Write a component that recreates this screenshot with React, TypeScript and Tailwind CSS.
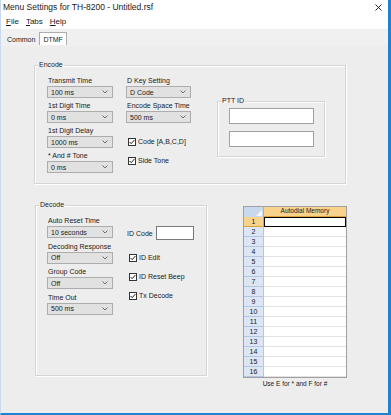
import React from "react";

const font = { fontFamily: '"Liberation Sans", Arial, sans-serif' };

function Select({ value, w = "w-[66px]" }: { value: string; w?: string }) {
  return (
    <div
      className={`${w} h-[12px] flex items-center justify-between border border-[#adadad] bg-[#e1e1e1] pl-[3px] pr-[4px] text-[7px] leading-none whitespace-nowrap`}
    >
      <span>{value}</span>
      <svg width="6" height="4" viewBox="0 0 6 4">
        <path d="M0.5 0.5 L3 3 L5.5 0.5" fill="none" stroke="#606060" strokeWidth="0.9" />
      </svg>
    </div>
  );
}

function Field({ label, value, w }: { label: string; value: string; w?: string }) {
  return (
    <div className="flex flex-col">
      <div className="h-[10px] text-[7px] leading-[10px] pl-[1px] whitespace-nowrap">{label}</div>
      <Select value={value} w={w} />
    </div>
  );
}

function Check({ label }: { label: string }) {
  return (
    <div className="flex items-center gap-[2px] h-[9px] text-[7px] leading-none pl-[2px] whitespace-nowrap">
      <svg width="8" height="8" viewBox="0 0 8 8">
        <rect x="0.5" y="0.5" width="7" height="7" fill="#fff" stroke="#333" />
        <path d="M1.6 4 L3.2 5.7 L6.4 2" fill="none" stroke="#222" strokeWidth="1" />
      </svg>
      <span>{label}</span>
    </div>
  );
}

function GroupLegend({ text }: { text: string }) {
  return (
    <legend className="ml-[3px] px-[1px] h-[10px] text-[7px] leading-[10px] whitespace-nowrap">{text}</legend>
  );
}

const box = "border border-[#d5d5d5] shadow-[inset_1px_1px_0_#fff,1px_1px_0_#fff]";
const rows = Array.from({ length: 16 }, (_, i) => i + 1);

export default function App() {
  return (
    <div
      style={font}
      className="w-[391px] h-[415px] flex flex-col bg-[#ededed] text-[#1a1a1a] border-l border-l-[#c9d9ee] border-r-[3px] border-r-[#1883d7] border-b-2 border-b-[#1883d7] overflow-hidden"
    >
      {/* title bar */}
      <div className="h-[15px] bg-white flex items-center justify-between pl-[2px] pr-[6px]">
        <span className="text-[8.5px] leading-none">Menu Settings for TH-8200 - Untitled.rsf</span>
        <svg width="7" height="7" viewBox="0 0 7 7">
          <path d="M0.5 0.5 L6.5 6.5 M6.5 0.5 L0.5 6.5" stroke="#111" strokeWidth="0.9" />
        </svg>
      </div>
      {/* menu bar */}
      <div className="h-[14px] bg-white flex items-center gap-[7px] pl-[5px] text-[8px] leading-none">
        <span><u>F</u>ile</span>
        <span><u>T</u>abs</span>
        <span><u>H</u>elp</span>
      </div>
      {/* tabs */}
      <div className="h-[17px] flex items-end pl-[5px] gap-[3px] bg-[#f0f0f0]">
        <div className="h-[13px] px-[1px] flex items-center text-[7px] leading-none">Common</div>
        <div className="h-[13px] px-[3px] flex items-center border border-[#adadad] border-b-0 bg-white text-[7px] leading-none mb-[1px]">
          DTMF
        </div>
      </div>

      {/* page */}
      <div className="flex-1 flex flex-col pl-[33px] pt-[14px]">
        {/* Encode */}
        <fieldset className={`w-[312px] h-[124px] ${box}`}>
          <GroupLegend text="Encode" />
          <div className="flex pl-[12px] pt-[6px]">
            <div className="flex flex-col gap-[3px]">
              <Field label="Transmit Time" value="100 ms" />
              <Field label="1st Digit Time" value="0 ms" />
              <Field label="1st Digit Delay" value="1000 ms" />
              <Field label="* And # Tone" value="0 ms" />
            </div>
            <div className="flex flex-col ml-[13px] w-[65px]">
              <div className="flex flex-col gap-[3px]">
                <Field label="D Key Setting" value="D Code" w="w-[65px]" />
                <Field label="Encode Space Time" value="500 ms" w="w-[65px]" />
              </div>
              <div className="flex flex-col gap-[10px] mt-[14px]">
                <Check label="Code [A,B,C,D]" />
                <Check label="Side Tone" />
              </div>
            </div>
            <fieldset className={`ml-[26px] mt-[20px] w-[108px] h-[61px] ${box}`}>
              <legend className="ml-[3px] px-[1px] h-[10px] text-[7px] leading-[10px] whitespace-nowrap">PTT ID</legend>
              <div className="flex flex-col gap-[7px] pl-[11px] pt-[2px]">
                <div className="w-[85px] h-[16px] bg-white border border-[#a0a0a0]" />
                <div className="w-[85px] h-[16px] bg-white border border-[#a0a0a0]" />
              </div>
            </fieldset>
          </div>
        </fieldset>

        <div className="flex mt-[16px]">
          {/* Decode */}
          <fieldset className={`ml-[1px] w-[172px] h-[176px] ${box}`}>
            <GroupLegend text="Decode" />
            <div className="flex pl-[11px] pt-[6px]">
              <div className="flex flex-col gap-[3.5px]">
                <Field label="Auto Reset Time" value="10 seconds" />
                <Field label="Decoding Response" value="Off" />
                <Field label="Group Code" value="Off" />
                <Field label="Time Out" value="500 ms" />
              </div>
              <div className="flex flex-col ml-[14px] pt-[10px]">
                <div className="flex items-center gap-[3px] text-[7px] leading-none whitespace-nowrap">
                  <span>ID Code</span>
                  <div className="w-[38px] h-[14px] bg-white border border-[#7a7a7a]" />
                </div>
                <div className="flex flex-col gap-[10px] mt-[13px]">
                  <Check label="ID Edit" />
                  <Check label="ID Reset Beep" />
                  <Check label="Tx Decode" />
                </div>
              </div>
            </div>
          </fieldset>

          {/* Autodial table */}
          <div className="ml-[36px] mt-[6px] flex flex-col items-center">
            <div className="w-[104px] border border-[#a0a0a0] bg-white flex flex-col">
              <div className="flex h-[10px]">
                <div className="w-[20px] bg-[#c8d8ef] border-r border-[#9eb6d8] relative">
                  <svg className="absolute right-[1px] bottom-[1px]" width="6" height="6" viewBox="0 0 6 6">
                    <path d="M6 0 L6 6 L0 6 Z" fill="#fff" opacity="0.85" />
                  </svg>
                </div>
                <div className="flex-1 bg-[#f9d28c] border-b border-[#e0a040] flex items-center justify-center text-[6.5px] leading-none whitespace-nowrap">
                  Autodial Memory
                </div>
              </div>
              {rows.map((n) => (
                <div key={n} className="flex h-[10px]">
                  <div
                    className={`w-[20px] border-r border-b flex items-center justify-center text-[7px] leading-none ${
                      n === 1
                        ? "bg-[#f9d28c] border-[#e0a040]"
                        : "bg-[#dce6f4] border-[#b5c7e0]"
                    }`}
                  >
                    {n}
                  </div>
                  <div
                    className={`flex-1 ${
                      n === 1 ? "border border-black" : "border-b border-[#e3e3e3]"
                    }`}
                  />
                </div>
              ))}
            </div>
            <div className="mt-[1px] text-[6.5px] leading-[10px] whitespace-nowrap">Use E for * and F for #</div>
          </div>
        </div>
      </div>
    </div>
  );
}
